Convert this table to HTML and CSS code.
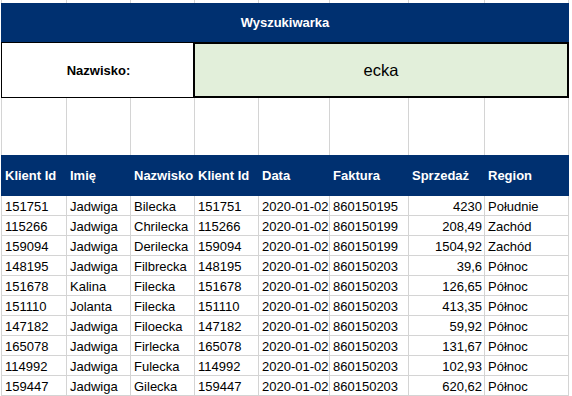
FILE: index.html
```html
<!DOCTYPE html>
<html lang="pl">
<head>
<meta charset="utf-8">
<title>Wyszukiwarka</title>
<link rel="stylesheet" href="styles.css">
</head>
<body>
<div class="sheet">
  <!-- partial row at the top -->
  <div class="gap"></div><div class="gap"></div><div class="gap"></div><div class="gap"></div>
  <div class="gap"></div><div class="gap"></div><div class="gap"></div><div class="gap"></div>

  <div class="title">Wyszukiwarka</div>

  <div class="label">Nazwisko:</div>
  <div class="search">ecka</div>

  <div class="gap"></div><div class="gap"></div><div class="gap"></div><div class="gap"></div>
  <div class="gap"></div><div class="gap"></div><div class="gap"></div><div class="gap"></div>

  <div class="h first">Klient Id</div>
  <div class="h">Imię</div>
  <div class="h">Nazwisko</div>
  <div class="h">Klient Id</div>
  <div class="h">Data</div>
  <div class="h">Faktura</div>
  <div class="h">Sprzedaż</div>
  <div class="h">Region</div>

  <div class="d">151751</div><div class="d">Jadwiga</div><div class="d">Bilecka</div><div class="d">151751</div><div class="d">2020-01-02</div><div class="d">860150195</div><div class="d num">4230</div><div class="d">Południe</div>
  <div class="d">115266</div><div class="d">Jadwiga</div><div class="d">Chrilecka</div><div class="d">115266</div><div class="d">2020-01-02</div><div class="d">860150199</div><div class="d num">208,49</div><div class="d">Zachód</div>
  <div class="d">159094</div><div class="d">Jadwiga</div><div class="d">Derilecka</div><div class="d">159094</div><div class="d">2020-01-02</div><div class="d">860150199</div><div class="d num">1504,92</div><div class="d">Zachód</div>
  <div class="d">148195</div><div class="d">Jadwiga</div><div class="d">Filbrecka</div><div class="d">148195</div><div class="d">2020-01-02</div><div class="d">860150203</div><div class="d num">39,6</div><div class="d">Północ</div>
  <div class="d">151678</div><div class="d">Kalina</div><div class="d">Filecka</div><div class="d">151678</div><div class="d">2020-01-02</div><div class="d">860150203</div><div class="d num">126,65</div><div class="d">Północ</div>
  <div class="d">151110</div><div class="d">Jolanta</div><div class="d">Filecka</div><div class="d">151110</div><div class="d">2020-01-02</div><div class="d">860150203</div><div class="d num">413,35</div><div class="d">Północ</div>
  <div class="d">147182</div><div class="d">Jadwiga</div><div class="d">Filoecka</div><div class="d">147182</div><div class="d">2020-01-02</div><div class="d">860150203</div><div class="d num">59,92</div><div class="d">Północ</div>
  <div class="d">165078</div><div class="d">Jadwiga</div><div class="d">Firlecka</div><div class="d">165078</div><div class="d">2020-01-02</div><div class="d">860150203</div><div class="d num">131,67</div><div class="d">Północ</div>
  <div class="d">114992</div><div class="d">Jadwiga</div><div class="d">Fulecka</div><div class="d">114992</div><div class="d">2020-01-02</div><div class="d">860150203</div><div class="d num">102,93</div><div class="d">Północ</div>
  <div class="d">159447</div><div class="d">Jadwiga</div><div class="d">Gilecka</div><div class="d">159447</div><div class="d">2020-01-02</div><div class="d">860150203</div><div class="d num">620,62</div><div class="d">Północ</div>
</div>
</body>
</html>
```

FILE: styles.css
```css
body {
  margin: 0;
  background: #fff;
  color: #000;
  font-family: "Liberation Sans", Arial, sans-serif;
  font-size: 13px;
}

/* spreadsheet grid: eight columns, fixed row heights */
.sheet {
  display: grid;
  grid-template-columns: 65px 64px 64px 64px 71px 79px 76px 84px;
  grid-template-rows: 3px 39px 56px 57px 41px repeat(10, 20px);
  margin-left: 1px;
  border-left: 1px solid #d4d4d4;
}

.sheet > div {
  box-sizing: border-box;
  min-width: 0;
}

.gap {
  border-right: 1px solid #d4d4d4;
}

.title {
  grid-column: 1 / -1;
  margin-left: -1px;
  background: #003070;
  color: #fff;
  font-weight: bold;
  display: flex;
  align-items: center;
  justify-content: center;
}

.label {
  grid-column: 1 / 4;
  margin-left: -1px;
  border: 1px solid #000;
  border-right: 0;
  font-weight: bold;
  display: flex;
  align-items: center;
  justify-content: center;
}

.search {
  grid-column: 4 / -1;
  margin-left: -2px;
  border: 2px solid #000;
  background: #e2efda;
  font-size: 16.5px;
  display: flex;
  align-items: center;
  justify-content: center;
}

.h {
  background: #003070;
  color: #fff;
  font-weight: bold;
  display: flex;
  align-items: center;
  padding-left: 3px;
  white-space: nowrap;
}

.h.first {
  margin-left: -1px;
  padding-left: 4px;
}

.d {
  border-right: 1px solid #d4d4d4;
  border-bottom: 1px solid #d4d4d4;
  display: flex;
  align-items: flex-end;
  padding: 0 2px 0 3px;
  line-height: 16px;
  white-space: nowrap;
}

.d.num {
  justify-content: flex-end;
}
```
